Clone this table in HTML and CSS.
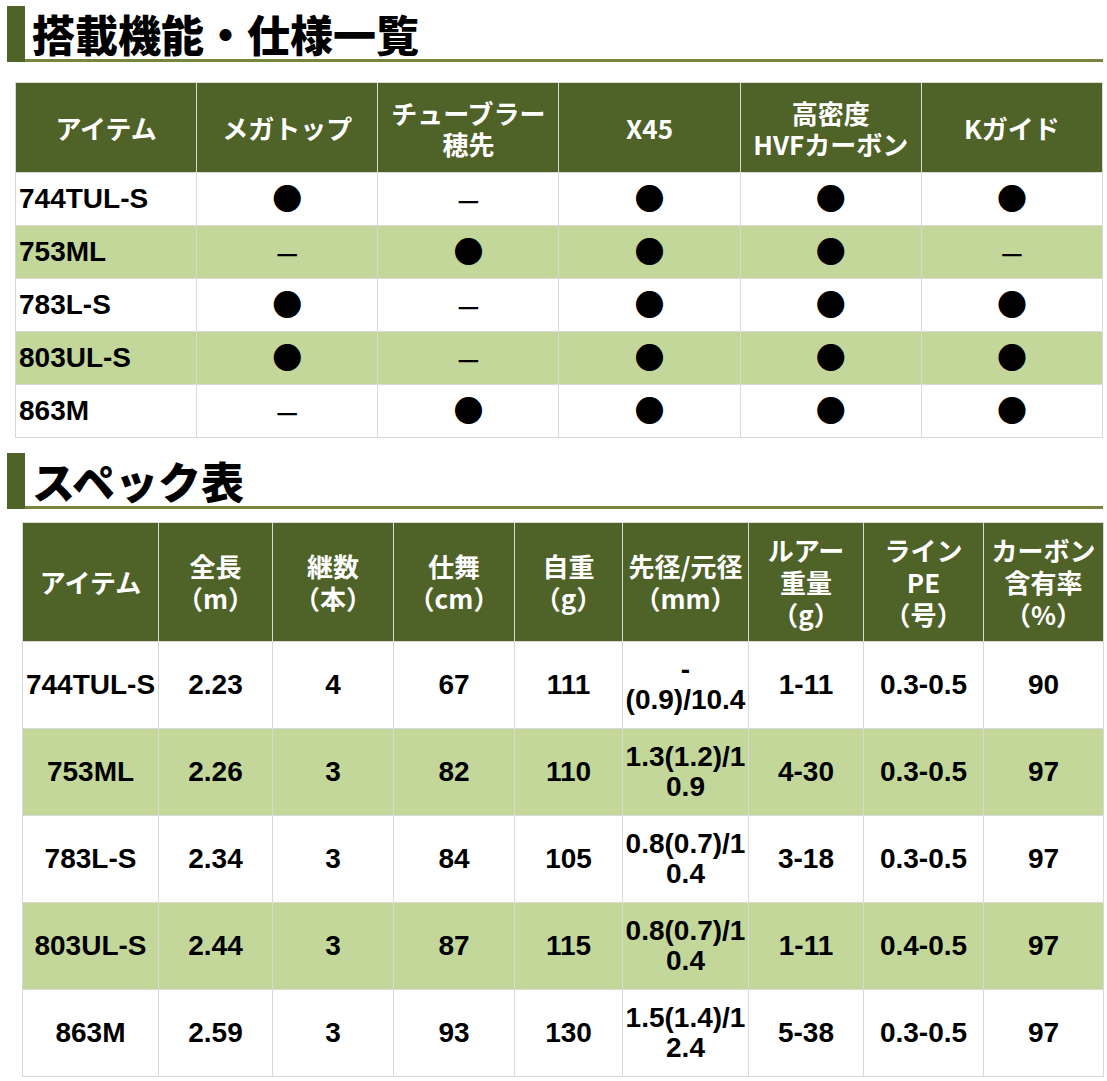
FILE: index.html
```html
<!DOCTYPE html>
<html lang="ja">
<head>
<meta charset="utf-8">
<title>搭載機能・仕様一覧</title>
<link rel="stylesheet" href="styles.css">
</head>
<body>
<h2 class="section-title section-title--first"><span class="section-bar"></span><span class="section-text">搭載機能・仕様一覧</span></h2>

<table class="feature-table">
  <colgroup>
    <col><col><col><col><col><col>
  </colgroup>
  <thead>
    <tr>
      <th>アイテム</th>
      <th>メガトップ</th>
      <th>チューブラー<br>穂先</th>
      <th>X45</th>
      <th>高密度<br>HVFカーボン</th>
      <th>Kガイド</th>
    </tr>
  </thead>
  <tbody>
    <tr>
      <td class="name">744TUL-S</td>
      <td><span class="dot">●</span></td>
      <td><span class="dash">—</span></td>
      <td><span class="dot">●</span></td>
      <td><span class="dot">●</span></td>
      <td><span class="dot">●</span></td>
    </tr>
    <tr class="alt">
      <td class="name">753ML</td>
      <td><span class="dash">—</span></td>
      <td><span class="dot">●</span></td>
      <td><span class="dot">●</span></td>
      <td><span class="dot">●</span></td>
      <td><span class="dash">—</span></td>
    </tr>
    <tr>
      <td class="name">783L-S</td>
      <td><span class="dot">●</span></td>
      <td><span class="dash">—</span></td>
      <td><span class="dot">●</span></td>
      <td><span class="dot">●</span></td>
      <td><span class="dot">●</span></td>
    </tr>
    <tr class="alt">
      <td class="name">803UL-S</td>
      <td><span class="dot">●</span></td>
      <td><span class="dash">—</span></td>
      <td><span class="dot">●</span></td>
      <td><span class="dot">●</span></td>
      <td><span class="dot">●</span></td>
    </tr>
    <tr>
      <td class="name">863M</td>
      <td><span class="dash">—</span></td>
      <td><span class="dot">●</span></td>
      <td><span class="dot">●</span></td>
      <td><span class="dot">●</span></td>
      <td><span class="dot">●</span></td>
    </tr>
  </tbody>
</table>

<h2 class="section-title section-title--second"><span class="section-bar"></span><span class="section-text">スペック表</span></h2>

<table class="spec-table">
  <colgroup>
    <col class="c1"><col class="c2"><col class="c3"><col class="c4"><col class="c5"><col class="c6"><col class="c7"><col class="c8"><col class="c9">
  </colgroup>
  <thead>
    <tr>
      <th>アイテム</th>
      <th>全長<br>（m）</th>
      <th>継数<br>（本）</th>
      <th>仕舞<br>（cm）</th>
      <th>自重<br>（g）</th>
      <th>先径/元径<br>（mm）</th>
      <th>ルアー<br>重量<br>（g）</th>
      <th>ライン<br>PE<br>（号）</th>
      <th>カーボン<br>含有率<br>（%）</th>
    </tr>
  </thead>
  <tbody>
    <tr>
      <td>744TUL-S</td><td>2.23</td><td>4</td><td>67</td><td>111</td><td>-<br>(0.9)/10.4</td><td>1-11</td><td>0.3-0.5</td><td>90</td>
    </tr>
    <tr class="alt">
      <td>753ML</td><td>2.26</td><td>3</td><td>82</td><td>110</td><td>1.3(1.2)/1<br>0.9</td><td>4-30</td><td>0.3-0.5</td><td>97</td>
    </tr>
    <tr>
      <td>783L-S</td><td>2.34</td><td>3</td><td>84</td><td>105</td><td>0.8(0.7)/1<br>0.4</td><td>3-18</td><td>0.3-0.5</td><td>97</td>
    </tr>
    <tr class="alt">
      <td>803UL-S</td><td>2.44</td><td>3</td><td>87</td><td>115</td><td>0.8(0.7)/1<br>0.4</td><td>1-11</td><td>0.4-0.5</td><td>97</td>
    </tr>
    <tr>
      <td>863M</td><td>2.59</td><td>3</td><td>93</td><td>130</td><td>1.5(1.4)/1<br>2.4</td><td>5-38</td><td>0.3-0.5</td><td>97</td>
    </tr>
  </tbody>
</table>
</body>
</html>
```

FILE: styles.css
```css
html, body {
  margin: 0;
  padding: 0;
  background: #ffffff;
}

body {
  font-family: "Noto Sans CJK JP", "Noto Sans", sans-serif;
  color: #000;
}

.section-title {
  display: flex;
  align-items: flex-end;
  margin: 0 4px 0 7px;
  font-size: 43px;
  font-weight: 900;
  line-height: 52px;
}

.section-title--first {
  margin-top: 6px;
  margin-bottom: 20px;
}

.section-title--second {
  margin-top: 15px;
  margin-bottom: 13px;
}

.section-bar {
  flex: 0 0 18px;
  height: 56px;
  background: #4f6228;
}

.section-text {
  flex: 1 1 auto;
  padding-left: 7px;
  border-bottom: 3px solid #76873d;
}

table {
  border-collapse: collapse;
  table-layout: fixed;
}

th, td {
  border: 1px solid #d9d9d9;
  padding: 0;
  text-align: center;
  vertical-align: middle;
}

th {
  background: #4f6228;
  color: #ffffff;
  font-family: "Noto Sans CJK JP", "Noto Sans", sans-serif;
  font-weight: 700;
  font-size: 26px;
  line-height: 31px;
}

td {
  font-family: "Liberation Sans", Arial, sans-serif;
  font-weight: 700;
  font-size: 28px;
  line-height: 30px;
}

tr.alt td {
  background: #c4d79b;
}

/* feature table */
.feature-table {
  width: 1088px;
  margin-left: 15px;
}

.feature-table thead th {
  height: 89px;
}

.feature-table tbody td {
  height: 52px;
}

.feature-table td.name {
  text-align: left;
  padding-left: 3px;
}

.dot {
  font-family: "Noto Sans CJK JP", sans-serif;
  font-size: 30px;
  line-height: 30px;
}

.dash {
  font-family: "Noto Sans CJK JP", sans-serif;
  font-weight: 700;
  font-size: 24px;
  line-height: 30px;
}

/* spec table */
.spec-table {
  width: 1081px;
  margin-left: 22px;
}

.spec-table .c1 { width: 136px; }
.spec-table .c2 { width: 114px; }
.spec-table .c3 { width: 121px; }
.spec-table .c4 { width: 121px; }
.spec-table .c5 { width: 108px; }
.spec-table .c6 { width: 126px; }
.spec-table .c7 { width: 115px; }
.spec-table .c8 { width: 120px; }
.spec-table .c9 { width: 120px; }

.spec-table thead th {
  height: 118px;
  line-height: 32px;
}

.spec-table tbody td {
  height: 86px;
  white-space: nowrap;
}
```
